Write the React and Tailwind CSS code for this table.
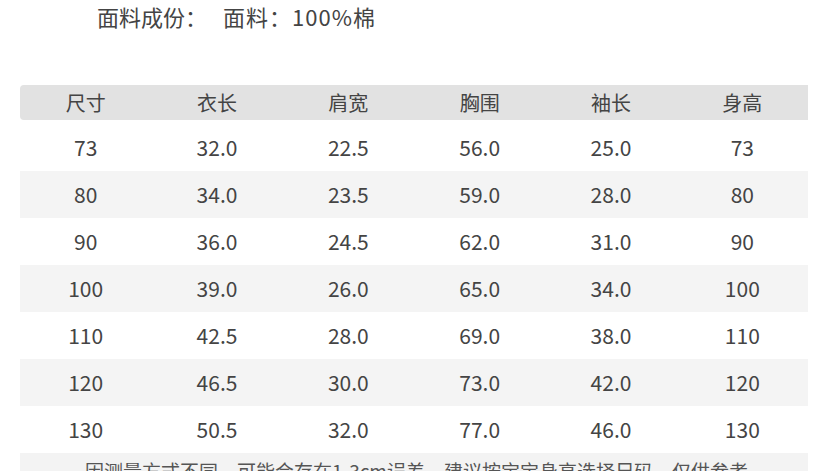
import React from "react";

const columns = ["尺寸", "衣长", "肩宽", "胸围", "袖长", "身高"];

const rows = [
  ["73", "32.0", "22.5", "56.0", "25.0", "73"],
  ["80", "34.0", "23.5", "59.0", "28.0", "80"],
  ["90", "36.0", "24.5", "62.0", "31.0", "90"],
  ["100", "39.0", "26.0", "65.0", "34.0", "100"],
  ["110", "42.5", "28.0", "69.0", "38.0", "110"],
  ["120", "46.5", "30.0", "73.0", "42.0", "120"],
  ["130", "50.5", "32.0", "77.0", "46.0", "130"],
];

const font = { fontFamily: '"Noto Sans CJK SC", "Noto Sans", sans-serif' };

export default function App() {
  return (
    <div className="h-[471px] w-[828px] overflow-hidden bg-white text-[#444444]" style={font}>
      <div className="flex h-[32px] items-center pl-[97px] text-[22px] leading-none">
        <span>面料成份：</span>
        <span className="ml-[16px] tracking-[1px]">面料：100%棉</span>
      </div>

      <div className="mx-[20px] mt-[53px]">
        <div className="grid h-[35px] grid-cols-6 items-center rounded-l-sm bg-[#e2e2e2] text-[20px]">
          {columns.map((col) => (
            <div key={col} className="text-center">{col}</div>
          ))}
        </div>
        <div className="h-[4px]" />
        {rows.map((row, i) => (
          <div
            key={row[0]}
            className={`grid h-[47px] grid-cols-6 items-center text-[21px] ${i % 2 === 1 ? "bg-[#f4f4f4]" : "bg-white"}`}
          >
            {row.map((cell, j) => (
              <div key={j} className="text-center">{cell}</div>
            ))}
          </div>
        ))}
        <div className="h-[30px] bg-[#f3f3f3] pl-[65px] pt-[8px] text-[19px] leading-none text-[#555555]">
          因测量方式不同，可能会存在1-3cm误差，建议按宝宝身高选择尺码，仅供参考。
        </div>
      </div>
    </div>
  );
}
